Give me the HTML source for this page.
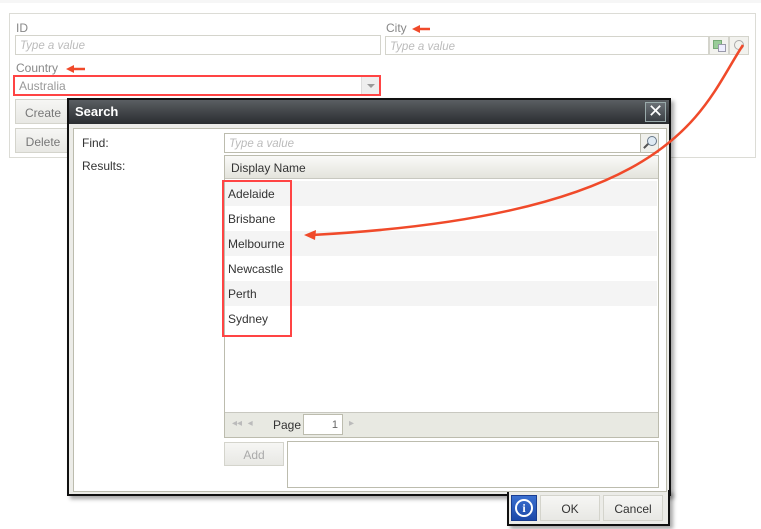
<!DOCTYPE html>
<html><head><meta charset="utf-8"><style>
*{box-sizing:border-box;margin:0;padding:0}
body{width:761px;height:529px;background:#fff;font-family:"Liberation Sans","DejaVu Sans",sans-serif;font-size:12px;position:relative;overflow:hidden;color:#333}
.a{position:absolute}
.lbl{color:#888;font-size:12px}
.inp{border:1px solid #d4d4cc;background:#fff;color:#bbb;font-style:italic;font-size:11.5px;padding:4px 4px 0}
.btn{border:1px solid #d4d4cc;background:linear-gradient(#f6f6f4,#e8e8e4);color:#777;text-align:center}
.row{position:absolute;left:225px;width:432px;height:25px;padding:6px 0 0 3px;font-size:12px;color:#333}
</style></head><body>
<div class="a" style="left:0;top:0;width:761px;height:3px;background:#f6f6f6"></div>
<div class="a" style="left:9px;top:13px;width:747px;height:145px;border:1px solid #dcdcd6;background:#fff"></div>
<div class="a lbl" style="left:16px;top:21px">ID</div>
<div class="a inp" style="left:15px;top:35px;width:366px;height:20px">Type a value</div>
<div class="a lbl" style="left:386px;top:21px">City</div>
<div class="a inp" style="left:385px;top:36px;width:324px;height:19px">Type a value</div>
<div class="a" style="left:709px;top:36px;width:20px;height:19px;border:1px solid #d4d4cc;background:#f2f2ee"><div class="a" style="left:3px;top:3px;width:9px;height:9px;background:#9c9;border:1px solid #7a7"></div><div class="a" style="left:8px;top:7px;width:8px;height:8px;background:#eef;border:1px solid #99a"></div></div>
<div class="a" style="left:729px;top:36px;width:20px;height:19px;border:1px solid #d4d4cc;background:#f2f2ee"><div class="a" style="left:4px;top:3px;width:10px;height:10px;border:1px solid #aaa;border-radius:50%"></div></div>
<div class="a lbl" style="left:16px;top:61px">Country</div>
<div class="a" style="left:13px;top:75px;width:368px;height:21px;border:2px solid #f44;background:#fff"><span class="a" style="left:4px;top:2px;color:#999;font-size:12px">Australia</span><div class="a" style="left:346px;top:0;width:18px;height:17px;background:#eee;border-left:1px solid #ddd"><div class="a" style="left:5px;top:7px;border:4px solid transparent;border-top:4px solid #999"></div></div></div>
<div class="a btn" style="left:15px;top:99px;width:56px;height:25px;padding-top:6px">Create</div>
<div class="a btn" style="left:15px;top:128px;width:56px;height:25px;padding-top:6px">Delete</div>

<div class="a" style="left:67px;top:98px;width:604px;height:398px;border:2px solid #111;background:#ecece8;box-shadow:3px 3px 4px rgba(0,0,0,.35)"></div>
<div class="a" style="left:507px;top:490px;width:163px;height:36px;border:2px solid #111;border-top:none;background:#ecece8;box-shadow:3px 3px 4px rgba(0,0,0,.35)"></div>
<div class="a" style="left:69px;top:100px;width:600px;height:24px;background:linear-gradient(#5a5e62,#2a2d30);color:#fff;font-weight:bold;font-size:13px;padding:4px 6px">Search</div>
<div class="a" style="left:645px;top:102px;width:21px;height:20px;border:1px solid #9aa;background:linear-gradient(#6a7075,#3a3f44);color:#fff;font-size:18px;line-height:17px;text-align:center">✕</div>
<div class="a" style="left:73px;top:128px;width:594px;height:364px;border:1px solid #bcbcae;background:#fff"></div>
<div class="a" style="left:82px;top:136px;font-size:12px">Find:</div>
<div class="a" style="left:82px;top:159px;font-size:12px">Results:</div>
<div class="a inp" style="left:224px;top:133px;width:417px;height:20px;border-color:#bcbcae">Type a value</div>
<div class="a" style="left:640px;top:133px;width:19px;height:20px;border:1px solid #bcbcae;background:#f0f0ec"><div class="a" style="left:6px;top:2px;width:10px;height:10px;border:1px solid #678;border-radius:50%;background:#dfeaf4"></div><div class="a" style="left:2px;top:11px;width:6px;height:2px;background:#555;transform:rotate(-45deg)"></div></div>
<div class="a" style="left:224px;top:155px;width:435px;height:283px;border:1px solid #bcbcae;background:#fff"></div>
<div class="a" style="left:225px;top:156px;width:433px;height:23px;background:linear-gradient(#fafaf8,#e4e4dc);border-bottom:1px solid #c8c8c0;padding:5px 6px;font-size:12px">Display Name</div>
<div class="row" style="top:181px;background:#f4f4f4">Adelaide</div>
<div class="row" style="top:206px">Brisbane</div>
<div class="row" style="top:231px;background:#f4f4f4">Melbourne</div>
<div class="row" style="top:256px">Newcastle</div>
<div class="row" style="top:281px;background:#f4f4f4">Perth</div>
<div class="row" style="top:306px">Sydney</div>
<div class="a" style="left:222px;top:180px;width:70px;height:157px;border:2px solid #f44"></div>
<div class="a" style="left:225px;top:412px;width:433px;height:25px;background:#e8e9e2;border-top:1px solid #c8c8c0"></div>
<div class="a" style="left:232px;top:418px;color:#bbb;font-size:10px">◂◂ &nbsp;◂</div>
<div class="a" style="left:273px;top:418px;font-size:12px">Page</div>
<div class="a" style="left:303px;top:414px;width:40px;height:21px;border:1px solid #bcbcae;background:#fff;text-align:right;padding:4px 4px;color:#666;font-size:11px">1</div>
<div class="a" style="left:349px;top:418px;color:#bbb;font-size:10px">▸</div>
<div class="a btn" style="left:224px;top:442px;width:60px;height:24px;padding-top:5px;color:#aaa">Add</div>
<div class="a" style="left:287px;top:441px;width:372px;height:47px;border:1px solid #bcbcae;background:#fff"></div>
<div class="a" style="left:511px;top:495px;width:26px;height:26px;background:linear-gradient(#3b70d0,#1c48a8);border:1px solid #1a3d90"><div class="a" style="left:3px;top:3px;width:18px;height:18px;border:2px solid #fff;border-radius:50%;color:#fff;font-weight:bold;font-size:12px;text-align:center;line-height:14px;font-family:'Liberation Serif',serif">i</div></div>
<div class="a btn" style="left:540px;top:495px;width:60px;height:26px;padding-top:6px;color:#333">OK</div>
<div class="a btn" style="left:603px;top:495px;width:60px;height:26px;padding-top:6px;color:#333">Cancel</div>

<svg class="a" style="left:0;top:0" width="761" height="529">
<path d="M743,45 C700,110 680,215 312,235" fill="none" stroke="#f04a2a" stroke-width="2.5"/>
<path d="M304,235 L316,230 L315,240 Z" fill="#f04a2a"/>
<path d="M419,29 L430,29" stroke="#f04a2a" stroke-width="2.5"/>
<path d="M412,29 L420,25 L420,33 Z" fill="#f04a2a"/>
<path d="M73,69 L85,69" stroke="#f04a2a" stroke-width="2.5"/>
<path d="M66,69 L74,65 L74,73 Z" fill="#f04a2a"/>
</svg>
</body></html>
